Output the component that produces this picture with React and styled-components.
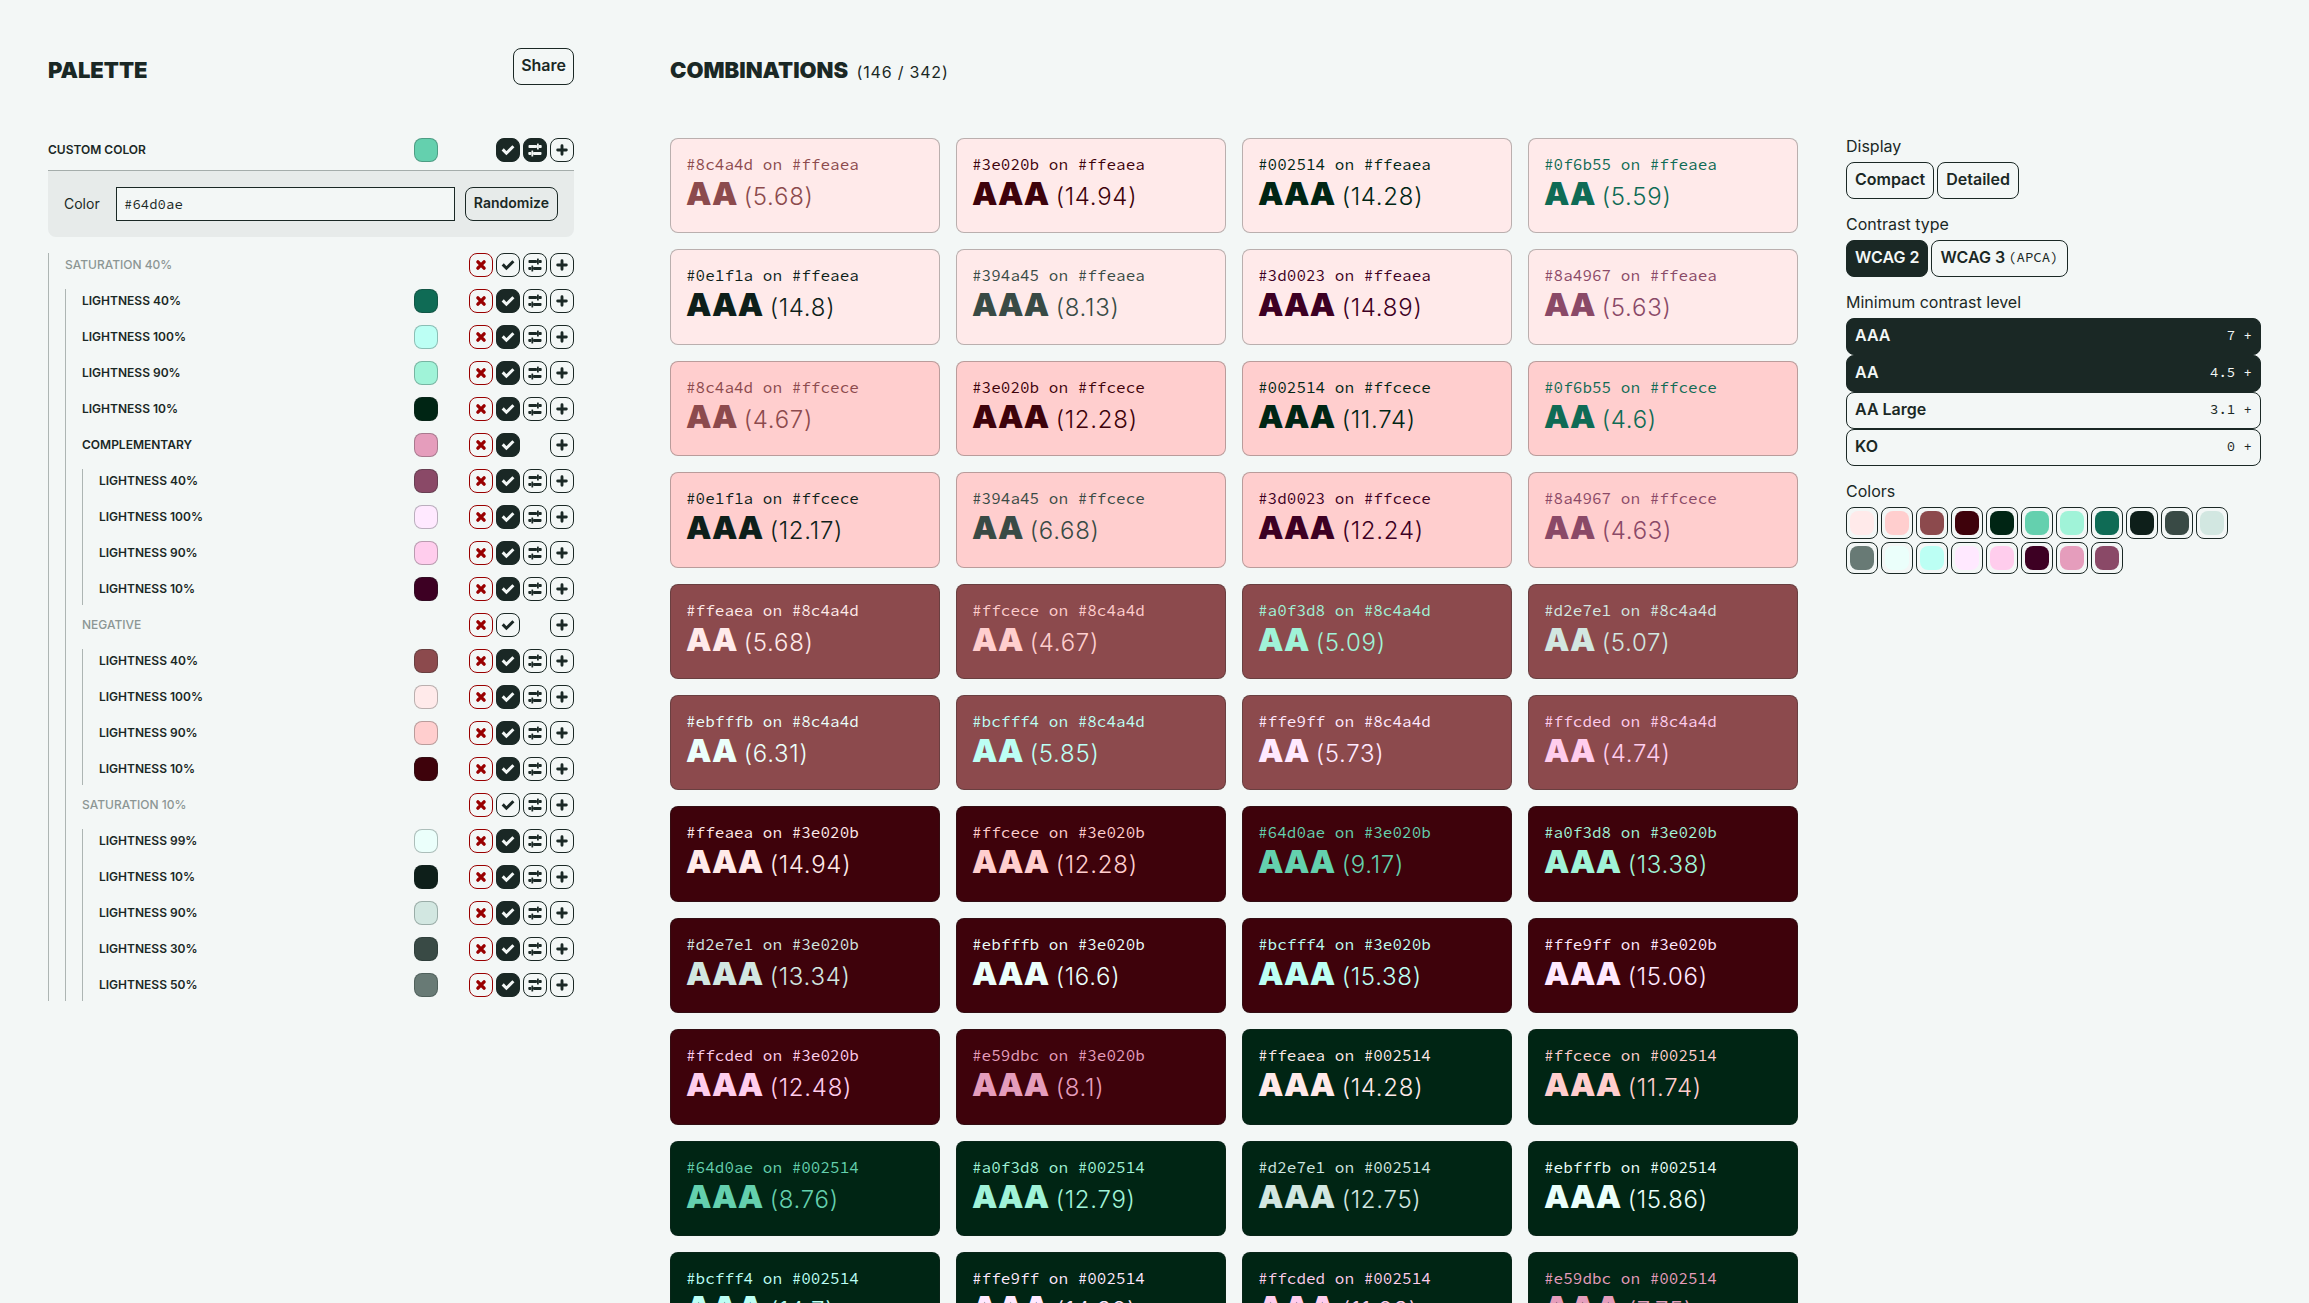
import React from 'react';
import styled, { createGlobalStyle } from 'styled-components';

const ink = '#1a2825';
const paper = '#f3f7f6';
const mono = '"Source Code Pro", "Noto Sans Mono", "Liberation Mono", monospace';

const Global = createGlobalStyle`
  * { box-sizing: border-box; }
  body {
    margin: 0;
    height: 100vh;
    overflow: hidden;
    background: ${paper};
    color: ${ink};
    font: 16px/24px Inter, sans-serif;
  }
  button, input { font: inherit; color: inherit; margin: 0; }
  h1, h2, p, ul, fieldset { margin: 0; padding: 0; }
  ul { list-style: none; }
`;

const Page = styled.div`
  display: grid;
  grid-template-columns: minmax(0, 526fr) minmax(0, 1591fr);
  gap: 96px;
  padding: 48px;
`;

const Header = styled.header`
  display: flex;
  align-items: flex-start;
  justify-content: space-between;
  height: 90px;
`;

const Title = styled.h2`
  padding-top: 8px;
  font-size: 22px;
  line-height: 28px;
  font-weight: 900;
  text-transform: uppercase;
`;

const Count = styled.span`
  margin-left: 4px;
  font-size: 16px;
  font-weight: 400;
  letter-spacing: 0.05em;
`;

const Button = styled.button`
  display: flex;
  align-items: center;
  gap: 3px;
  padding: 4px 8px 7px;
  border: 1px solid ${ink};
  border-radius: 8px;
  background: ${p => (p.$on ? ink : 'transparent')};
  color: ${p => (p.$on ? paper : ink)};
  font-weight: 600;
`;

const ShareButton = styled(Button)`
  padding: 4px 7px 7px;
`;

const SmallButton = styled(Button)`
  padding: 3px 8px 5px;
  font-size: 14px;
`;

const Row = styled.div`
  display: grid;
  grid-template-columns: 1fr 24px 25px repeat(4, 24px);
  column-gap: 3px;
  align-items: center;
  padding-bottom: 4px;
`;

const Label = styled.p`
  color: ${p => (p.$muted ? '#8c9694' : ink)};
  font-size: 12px;
  font-weight: ${p => (p.$muted ? 500 : 600)};
  text-transform: uppercase;
`;

const Swatch = styled.span`
  width: 24px;
  height: 24px;
  border: 1px solid rgba(26, 40, 37, 0.3);
  border-radius: 8px;
  background: ${p => p.$color} border-box;
`;

const IconButton = styled.button`
  grid-column: ${p => p.$col};
  display: grid;
  place-items: center;
  width: 24px;
  height: 24px;
  padding: 0;
  border: 1px solid ${p => (p.$danger ? '#990000' : ink)};
  border-radius: 8px;
  background: ${p => (p.$on ? ink : 'transparent')};
  color: ${p => (p.$danger ? '#990000' : p.$on ? paper : ink)};
`;

const Branch = styled.ul`
  display: grid;
  gap: 8px;
  margin-top: ${p => (p.$root ? 16 : 8)}px;
  padding-left: 16px;
  border-left: 1px solid #adb5b3;
`;

const Editor = styled.div`
  display: flex;
  align-items: center;
  margin-top: 4px;
  padding: 16px;
  border-top: 1px solid #a5adab;
  border-radius: 0 0 8px 8px;
  background: #e7ebea;
`;

const EditorLabel = styled.label`
  width: 52px;
  font-size: 14px;
`;

const ColorInput = styled.input`
  flex: 1;
  min-width: 0;
  height: 34px;
  margin-right: 10px;
  padding: 0 7px;
  border: 1px solid ${ink};
  border-radius: 0;
  background: ${paper};
  font: 14px/24px ${mono};
`;

const Columns = styled.div`
  display: grid;
  grid-template-columns: minmax(0, 1128fr) minmax(0, 415fr);
  gap: 48px;
  align-items: start;
`;

const Cards = styled.ul`
  display: grid;
  grid-template-columns: repeat(4, minmax(0, 1fr));
  gap: 16px;
`;

const Card = styled.li`
  padding: 14px 15px 19px;
  border: 1px solid rgba(26, 40, 37, 0.3);
  border-radius: 8px;
  background: ${p => p.$bg} border-box;
  color: ${p => p.$fg};
`;

const Pair = styled.p`
  font: 16px/22px ${mono};
`;

const Score = styled.p`
  font-size: 32px;
  line-height: 1.2;
  font-weight: 900;
`;

const Ratio = styled.span`
  font-size: 24px;
  line-height: 1;
  font-weight: 300;
  letter-spacing: 0.03em;
`;

const Filters = styled.aside`
  display: grid;
  gap: 17px;
`;

const Group = styled.fieldset`
  min-width: 0;
  border: 0;
`;

const Legend = styled.legend`
  margin-bottom: 7px;
  padding: 0;
  line-height: 17px;
`;

const Options = styled.div`
  display: flex;
  flex-wrap: wrap;
  gap: 3px;
`;

const Levels = styled.div`
  display: grid;
`;

const LevelButton = styled(Button)`
  justify-content: space-between;
`;

const Code = styled.span`
  font: 400 14px/24px ${mono};
`;

const ColorButton = styled.button`
  display: block;
  width: 32px;
  height: 32px;
  padding: 3px;
  border: 1px solid ${ink};
  border-radius: 8px;
  background: transparent;
`;

const ColorDot = styled.span`
  display: block;
  height: 24px;
  border-radius: 8px;
  background: ${p => p.$color};
`;

const Cross = () => (
  <svg width="12" height="12" viewBox="0 0 12 12" fill="none" stroke="currentColor" strokeWidth="3.4" strokeLinecap="round">
    <path d="M2.900 2.900l6.200 6.200M9.100 2.900L2.900 9.100" />
  </svg>
);
const Check = () => (
  <svg width="14" height="14" viewBox="0 0 14 14" fill="none" stroke="currentColor" strokeWidth="3">
    <path d="M1.700 6.400l3.700 3.800 7-7" />
  </svg>
);
const Sliders = () => (
  <svg width="14" height="14" viewBox="0 0 14 14" fill="currentColor">
    <rect x="0.500" y="2.100" width="8.500" height="3" rx="0.800" />
    <rect x="9" y="0.600" width="1.800" height="6" rx="0.500" />
    <rect x="10.500" y="2.100" width="3.200" height="3" rx="0.800" />
    <rect x="0.300" y="8.900" width="3.200" height="3" rx="0.800" />
    <rect x="3.400" y="7.400" width="1.800" height="6" rx="0.500" />
    <rect x="5" y="8.900" width="8.500" height="3" rx="0.800" />
  </svg>
);
const Plus = () => (
  <svg width="12" height="12" viewBox="0 0 12 12" fill="none" stroke="currentColor" strokeWidth="2.900" strokeLinecap="round">
    <path d="M6 1.700v8.600M1.700 6h8.600" />
  </svg>
);

const leaf = (name, color) => ({ name, color, on: true, tune: true });

const tree = [
  {
    name: 'Saturation 40%',
    tune: true,
    children: [
      leaf('Lightness 40%', '#0f6b55'),
      leaf('Lightness 100%', '#bcfff4'),
      leaf('Lightness 90%', '#a0f3d8'),
      leaf('Lightness 10%', '#002514'),
      {
        name: 'Complementary',
        color: '#e59dbc',
        on: true,
        children: [
          leaf('Lightness 40%', '#8a4967'),
          leaf('Lightness 100%', '#ffe9ff'),
          leaf('Lightness 90%', '#ffcded'),
          leaf('Lightness 10%', '#3d0023'),
        ],
      },
      {
        name: 'Negative',
        children: [
          leaf('Lightness 40%', '#8c4a4d'),
          leaf('Lightness 100%', '#ffeaea'),
          leaf('Lightness 90%', '#ffcece'),
          leaf('Lightness 10%', '#3e020b'),
        ],
      },
      {
        name: 'Saturation 10%',
        tune: true,
        children: [
          leaf('Lightness 99%', '#ebfffb'),
          leaf('Lightness 10%', '#0e1f1a'),
          leaf('Lightness 90%', '#d2e7e1'),
          leaf('Lightness 30%', '#394a45'),
          leaf('Lightness 50%', '#687a75'),
        ],
      },
    ],
  },
];

const combos = [
  ['#ffeaea', '8c4a4d 5.68', '3e020b 14.94', '002514 14.28', '0f6b55 5.59', '0e1f1a 14.8', '394a45 8.13', '3d0023 14.89', '8a4967 5.63'],
  ['#ffcece', '8c4a4d 4.67', '3e020b 12.28', '002514 11.74', '0f6b55 4.6', '0e1f1a 12.17', '394a45 6.68', '3d0023 12.24', '8a4967 4.63'],
  ['#8c4a4d', 'ffeaea 5.68', 'ffcece 4.67', 'a0f3d8 5.09', 'd2e7e1 5.07', 'ebfffb 6.31', 'bcfff4 5.85', 'ffe9ff 5.73', 'ffcded 4.74'],
  ['#3e020b', 'ffeaea 14.94', 'ffcece 12.28', '64d0ae 9.17', 'a0f3d8 13.38', 'd2e7e1 13.34', 'ebfffb 16.6', 'bcfff4 15.38', 'ffe9ff 15.06', 'ffcded 12.48', 'e59dbc 8.1'],
  ['#002514', 'ffeaea 14.28', 'ffcece 11.74', '64d0ae 8.76', 'a0f3d8 12.79', 'd2e7e1 12.75', 'ebfffb 15.86', 'bcfff4 14.7', 'ffe9ff 14.39', 'ffcded 11.93', 'e59dbc 7.75'],
];

const swatches = [
  '#ffeaea', '#ffcece', '#8c4a4d', '#3e020b', '#002514', '#64d0ae', '#a0f3d8', '#0f6b55', '#0e1f1a', '#394a45',
  '#d2e7e1', '#687a75', '#ebfffb', '#bcfff4', '#ffe9ff', '#ffcded', '#3d0023', '#e59dbc', '#8a4967',
];

const levels = [['AAA', '7', true], ['AA', '4.5', true], ['AA Large', '3.1', false], ['KO', '0', false]];

function NodeRow({ name, color, on, tune, tuning, root }) {
  return (
    <Row>
      <Label $muted={!color}>{name}</Label>
      {color && <Swatch $color={color} />}
      {!root && <IconButton $col={4} $danger aria-label="Remove"><Cross /></IconButton>}
      <IconButton $col={5} $on={on} aria-label="Enable"><Check /></IconButton>
      {tune && <IconButton $col={6} $on={tuning} aria-label="Adjust"><Sliders /></IconButton>}
      <IconButton $col={7} aria-label="Add"><Plus /></IconButton>
    </Row>
  );
}

function Tree({ nodes, root }) {
  return (
    <Branch $root={root}>
      {nodes.map((n, i) => (
        <li key={i}>
          <NodeRow {...n} />
          {n.children && <Tree nodes={n.children} />}
        </li>
      ))}
    </Branch>
  );
}

export default function App() {
  return (
    <>
      <Global />
      <Page>
        <section>
          <Header>
            <Title>Palette</Title>
            <ShareButton>Share</ShareButton>
          </Header>
          <NodeRow name="Custom color" color="#64d0ae" on tune tuning root />
          <Editor>
            <EditorLabel htmlFor="color">Color</EditorLabel>
            <ColorInput id="color" defaultValue="#64d0ae" />
            <SmallButton>Randomize</SmallButton>
          </Editor>
          <Tree nodes={tree} root />
        </section>
        <main>
          <Header>
            <Title>Combinations <Count>(146 / 342)</Count></Title>
          </Header>
          <Columns>
            <Cards>
              {combos.flatMap(([bg, ...items]) =>
                items.map(item => {
                  const [fg, ratio] = item.split(' ');
                  return (
                    <Card key={fg + bg} $bg={bg} $fg={'#' + fg}>
                      <Pair>#{fg} on {bg}</Pair>
                      <Score>{Number(ratio) >= 7 ? 'AAA' : 'AA'} <Ratio>({ratio})</Ratio></Score>
                    </Card>
                  );
                })
              )}
            </Cards>
            <Filters>
              <Group>
                <Legend>Display</Legend>
                <Options>
                  <Button>Compact</Button>
                  <Button>Detailed</Button>
                </Options>
              </Group>
              <Group>
                <Legend>Contrast type</Legend>
                <Options>
                  <Button $on>WCAG 2</Button>
                  <Button>WCAG 3 <Code>(APCA)</Code></Button>
                </Options>
              </Group>
              <Group>
                <Legend>Minimum contrast level</Legend>
                <Levels>
                  {levels.map(([name, min, on]) => (
                    <LevelButton key={name} $on={on}>{name}<Code>{min} +</Code></LevelButton>
                  ))}
                </Levels>
              </Group>
              <Group>
                <Legend>Colors</Legend>
                <Options>
                  {swatches.map(c => (
                    <ColorButton key={c} aria-label={c}><ColorDot $color={c} /></ColorButton>
                  ))}
                </Options>
              </Group>
            </Filters>
          </Columns>
        </main>
      </Page>
    </>
  );
}
